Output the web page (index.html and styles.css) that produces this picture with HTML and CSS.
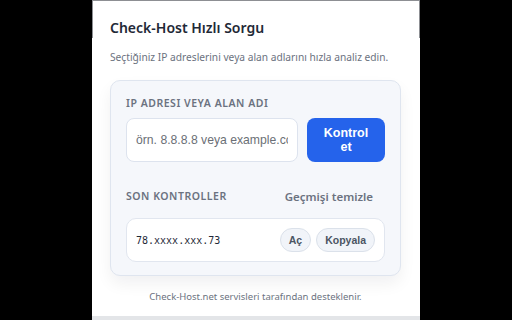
FILE: index.html
```html
<!DOCTYPE html>
<html lang="tr">
<head>
<meta charset="utf-8">
<link rel="stylesheet" href="styles.css">
</head>
<body>
<div class="popup">
  <h1 class="title">Check-Host Hızlı Sorgu</h1>
  <p class="subtitle">Seçtiğiniz IP adreslerini veya alan adlarını hızla analiz edin.</p>
  <div class="card">
    <div class="label">IP ADRESI VEYA ALAN ADI</div>
    <div class="input-row">
      <input class="input" type="text" placeholder="örn. 8.8.8.8 veya example.com">
      <button class="btn-primary">Kontrol et</button>
    </div>
    <div class="history-head">
      <div class="label">SON KONTROLLER</div>
      <button class="btn-link">Geçmişi temizle</button>
    </div>
    <div class="history-item">
      <span class="host">78.xxxx.xxx.73</span>
      <div class="actions">
        <button class="pill">Aç</button>
        <button class="pill">Kopyala</button>
      </div>
    </div>
  </div>
  <p class="footer">Check-Host.net servisleri tarafından desteklenir.</p>
</div>
</body>
</html>
```
FILE: styles.css
```css
html, body {
  margin: 0;
  padding: 0;
  background: #000;
}
.popup {
  position: relative;
  width: 328px;
  height: 320px;
  margin: 0 auto;
  box-sizing: border-box;
  padding: 18px 19px 0 18px;
  background: #fff;
  border-bottom: 4px solid #e3e5e8;
  display: flex;
  flex-direction: column;
  font-family: "Noto Sans", "Open Sans", sans-serif;
}
.popup::before {
  content: "";
  position: absolute;
  top: 0;
  left: 0;
  right: 0;
  height: 37px;
  border: 1px solid #8d8f93;
  border-bottom: none;
  pointer-events: none;
}
.title {
  margin: 0;
  font-size: 14px;
  line-height: 20px;
  font-weight: 600;
  color: #1f2937;
}
.subtitle {
  margin: 11px 0 0;
  font-size: 10.2px;
  line-height: 16px;
  color: #6b7280;
}
.card {
  margin-top: 15px;
  background: #f5f7fb;
  border: 1px solid #dfe5ef;
  border-radius: 10px;
  padding: 15px 15px 13px;
  box-shadow: 0 8px 16px rgba(15, 23, 42, 0.06);
}
.label {
  font-size: 10.5px;
  line-height: 14px;
  font-weight: 600;
  letter-spacing: 0.05em;
  color: #6b7280;
}
.input-row {
  margin-top: 8px;
  display: flex;
  gap: 9px;
}
.input {
  width: 172px;
  height: 44px;
  box-sizing: border-box;
  border: 1px solid #dde3ee;
  border-radius: 8px;
  background: #fff;
  padding: 0 9px;
  font-family: "Liberation Sans", Arial, sans-serif;
  font-size: 12.2px;
  color: #374151;
  outline: none;
}
.input::placeholder {
  color: #6b6f76;
}
.btn-primary {
  width: 79px;
  height: 44px;
  border: none;
  border-radius: 8px;
  background: #2563eb;
  color: #fff;
  font-family: "Liberation Sans", Arial, sans-serif;
  font-weight: 700;
  font-size: 12.5px;
  line-height: 14px;
  padding: 0 14px;
}
.history-head {
  margin-top: 22px;
  height: 24px;
  display: flex;
  align-items: center;
  justify-content: space-between;
}
.btn-link {
  border: none;
  background: none;
  padding: 0 12px 0 0;
  font-family: "Noto Sans", "Open Sans", sans-serif;
  font-size: 11.5px;
  font-weight: 600;
  color: #6b7280;
}
.history-item {
  margin-top: 10px;
  height: 44px;
  box-sizing: border-box;
  background: #fff;
  border: 1px solid #e1e6ef;
  border-radius: 10px;
  display: flex;
  align-items: center;
  justify-content: space-between;
  padding: 0 9px 0 9px;
}
.host {
  font-family: "DejaVu Sans Mono", "Liberation Mono", monospace;
  font-size: 10px;
  color: #1f2937;
}
.actions {
  display: flex;
  gap: 5px;
}
.pill {
  height: 24px;
  box-sizing: border-box;
  border: 1px solid #dbe1ea;
  border-radius: 12px;
  background: #f1f4f9;
  padding: 0 8px;
  font-family: "Liberation Sans", Arial, sans-serif;
  font-weight: 700;
  font-size: 10.5px;
  color: #4b5563;
}
.footer {
  margin: 13px 0 0;
  text-align: center;
  font-size: 9.5px;
  line-height: 16px;
  color: #6b7280;
}
```
